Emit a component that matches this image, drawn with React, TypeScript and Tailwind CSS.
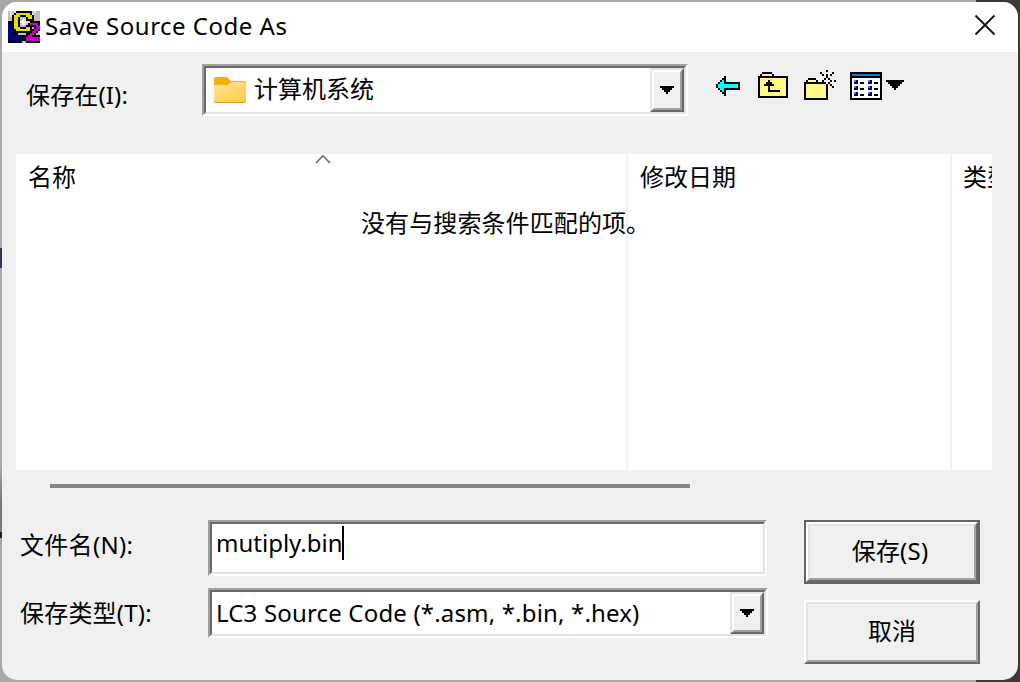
import React from "react";

const palette: Record<string, string> = {
  K: "#000000",
  C: "#00ffff",
  Y: "#ffff66",
  y: "#fff4a8",
  U: "#e6e000",
  B: "#000080",
  M: "#c800c8",
  g: "#c0c0c0",
  w: "#e4e4e4",
  W: "#ffffff",
  H: "#1477c9",
  N: "#000080",
  l: "#7474c4",
};

function PixelArt({ rows, label }: { rows: string[]; label: string }) {
  const w = rows[0].length;
  const h = rows.length;
  return (
    <svg
      width={w * 2}
      height={h * 2}
      viewBox={`0 0 ${w} ${h}`}
      shapeRendering="crispEdges"
      aria-label={label}
      className="block shrink-0"
    >
      {rows.flatMap((row, r) =>
        row.split("").map((ch, c) => {
          if (ch === ".") return null;
          const fill = ch === "Y" && (r + c) % 2 ? palette.y : palette[ch];
          return <rect key={`${r}-${c}`} x={c} y={r} width={1} height={1} fill={fill} />;
        })
      )}
    </svg>
  );
}

const logo = [
  "gwgwKKKKKKKKgwgg",
  "gwgKUUUUUUUKwggg",
  "gwKUUUKKKUUUKggg",
  "ggKUUKgggKUUKggg",
  "ggKUUKgWwKKKKggg",
  "KKKUUKWWWwgKKKKK",
  "BBKUUKgWwgKMMMMK",
  "BBKUUKgggKKKKKMM",
  "BBKUUUKKKUUKgKMM",
  "BBBKUUUUUUUKKMMK",
  "BBBKKKKKKKKKMMKg",
  "BBKKKggggKKMMKgg",
  "BBBBBBBKKKMMKKKK",
  "BBBBBBBKKMMMMMMM",
  "BBBBBBBKKMMMMMMM",
  "KKKKKKKggKKKKKKK",
];

const back = [
  "....K.......",
  "...KK.......",
  "..KCK.......",
  ".KCCKKKKKKKK",
  "KCCCCCCCCCCK",
  "KCCCCCCCCCCK",
  ".KCCKKKKKKKK",
  "..KCK.......",
  "...KK.......",
  "....K.......",
];

const up = [
  "..KKKKK........",
  ".KYYYYYK.......",
  "KKKKKKKKKKKKKKK",
  "KYYYYYYYYYYYYYK",
  "KYYYYKYYYYYYYYK",
  "KYYYKKKYYYYYYYK",
  "KYYKKKKKYYYYYYK",
  "KYYYYKYYYYYYYYK",
  "KYYYYKYYYYYYYYK",
  "KYYYYKKKKKKYYYK",
  "KYYYYYYYYYYYYYK",
  "KYYYYYYYYYYYYYK",
  "KKKKKKKKKKKKKKK",
];

const create = [
  "...........K....",
  "........K.....K.",
  ".........K.K.K..",
  "...........K....",
  "..KKKK....K.K...",
  ".KYYYYK..K...K.K",
  "KKKKKKKKKKK.K...",
  "KYYYYYYYYYYK.K..",
  "KYYYYYYYYYYK..K.",
  "KYYYYYYYYYYK....",
  "KYYYYYYYYYYK....",
  "KYYYYYYYYYYK....",
  "KYYYYYYYYYYK....",
  "KYYYYYYYYYYK....",
  "KKKKKKKKKKKK....",
];

const view = [
  "KKKKKKKKKKKKKKKK",
  "KHHHHHHHHHHHHHHK",
  "KKKKKKKKKKKKKKKK",
  "KWWWWWWWWWWWWWWK",
  "KWlNWWWWWlNWWWWK",
  "KWNNWKKWWNNWKKWK",
  "KWWWWWWWWWWWWWWK",
  "KWlNWWWWWlNWWWWK",
  "KWNNWKKWWNNWKKWK",
  "KWWWWWWWWWWWWWWK",
  "KWlNWWWWWlNWWWWK",
  "KWNNWKKWWNNWKKWK",
  "KWWWWWWWWWWWWWWK",
  "KKKKKKKKKKKKKKKK",
];

const bigArrow = ["KKKKKKKKK", ".KKKKKKK.", "..KKKKK..", "...KKK...", "....K...."];
const smallArrow = ["KKKKKKK", ".KKKKK.", "..KKK..", "...K..."];

function Sunken({ className, children }: { className: string; children: React.ReactNode }) {
  return (
    <div className={`border-2 border-t-[#a0a0a0] border-l-[#a0a0a0] border-r-white border-b-white ${className}`}>
      <div className="flex h-full w-full border-2 border-t-[#696969] border-l-[#696969] border-r-[#e3e3e3] border-b-[#e3e3e3] bg-white">
        {children}
      </div>
    </div>
  );
}

function DropButton() {
  return (
    <button className="h-full w-[34px] shrink-0 border-2 border-t-[#e3e3e3] border-l-[#e3e3e3] border-r-[#696969] border-b-[#696969] bg-[#f0f0f0]">
      <span className="flex h-full w-full items-center justify-center border-2 border-t-white border-l-white border-r-[#a0a0a0] border-b-[#a0a0a0]">
        <PixelArt rows={smallArrow} label="Open list" />
      </span>
    </button>
  );
}

function Raised({ children }: { children: React.ReactNode }) {
  return (
    <div className="h-full w-full border-2 border-t-white border-l-white border-r-[#696969] border-b-[#696969]">
      <div className="flex h-full w-full items-center justify-center border-2 border-t-[#e3e3e3] border-l-[#e3e3e3] border-r-[#a0a0a0] border-b-[#a0a0a0] bg-[#f0f0f0] pb-0.5">
        {children}
      </div>
    </div>
  );
}

export default function App() {
  return (
    <div className="flex h-[682px] w-[1020px] overflow-hidden bg-[linear-gradient(to_right,#a8a8a8_976px,#393939_976px)] py-0.5 font-['Noto_Sans','Noto_Sans_CJK_SC',sans-serif] text-2xl leading-8 whitespace-nowrap text-black">
      <div className="w-0.5 shrink-0 bg-[linear-gradient(to_bottom,transparent_246px,#2b3a50_246px,#2b3a50_266px,transparent_266px,transparent_464px,#777_500px,#777_530px,#222_530px,#222_536px,transparent_536px)]" />
      <div className="flex h-[678px] w-[1016px] flex-col overflow-hidden rounded-[15px] bg-[#f0f0f0]">
        <header className="flex h-[50px] shrink-0 items-center bg-white pr-[22px] pl-1.5">
          <PixelArt rows={logo} label="LC2" />
          <h1 className="mb-0.5 ml-[5px] grow tracking-[0.5px]">Save Source Code As</h1>
          <svg width="22" height="22" viewBox="0 0 22 22" className="mb-1" aria-label="Close">
            <path d="M1.5 1.5L20.5 20.5M20.5 1.5L1.5 20.5" stroke="#111" strokeWidth="1.8" />
          </svg>
        </header>

        <div className="flex h-[102px] shrink-0 items-start pt-3 pl-6">
          <span className="mt-[15px] w-44 tracking-[0.15px]">保存在(I):</span>
          <Sunken className="h-[52px] w-[486px]">
            <div className="flex grow items-center pl-2">
              <svg width="32" height="26" viewBox="0 0 32 26" aria-label="Folder" className="shrink-0">
                <defs>
                  <linearGradient id="folder" x1="0" y1="0" x2="1" y2="1">
                    <stop offset="0" stopColor="#ffe69a" />
                    <stop offset="1" stopColor="#ffcb43" />
                  </linearGradient>
                </defs>
                <path d="M0 2Q0 0 2 0H13L17 4H30Q32 4 32 6V12H0Z" fill="#f3b20b" />
                <path d="M0 8H14L17 5H30Q32 5 32 7V24Q32 26 30 26H2Q0 26 0 24Z" fill="#d99d22" />
                <path d="M0 8H14L17 5H30Q32 5 32 7V23Q32 25 30 25H2Q0 25 0 23Z" fill="url(#folder)" />
              </svg>
              <span className="mb-0.5 ml-2">计算机系统</span>
            </div>
            <DropButton />
          </Sunken>
          <div className="ml-7 flex pt-1.5">
            <div className="mt-1.5 w-[42px]">
              <PixelArt rows={back} label="Back" />
            </div>
            <div className="mt-0.5 w-[46px]">
              <PixelArt rows={up} label="Up one level" />
            </div>
            <div className="w-[46px]">
              <PixelArt rows={create} label="New folder" />
            </div>
            <div className="mt-0.5 flex gap-1">
              <PixelArt rows={view} label="View" />
              <div className="mt-2">
                <PixelArt rows={bigArrow} label="View menu" />
              </div>
            </div>
          </div>
        </div>

        <div className="relative mr-[26px] ml-3.5 flex h-[316px] shrink-0 overflow-hidden bg-white">
          <div className="w-[612px] shrink-0 border-r-2 border-[#edf3f9] pt-[7px] pl-3">名称</div>
          <div className="w-[324px] shrink-0 border-r-2 border-[#edf3f9] pt-[7px] pl-3">修改日期</div>
          <div className="w-10 shrink-0 overflow-hidden pt-[7px] pl-[11px]">类型</div>
          <svg width="16" height="10" viewBox="0 0 16 10" className="absolute top-0 left-[299px]" aria-label="Sorted ascending">
            <path d="M1 9L8 1.8L15 9" fill="none" stroke="#666" strokeWidth="1.6" />
          </svg>
          <p className="absolute top-[53px] left-[345px] tracking-[0.1px]">没有与搜索条件匹配的项。</p>
        </div>

        <div className="mt-3.5 ml-12 h-1 w-[640px] shrink-0 bg-[#858585]" />

        <div className="mt-8 flex pl-[18px]">
          <div className="flex w-[784px] flex-col gap-3">
            <div className="flex h-14">
              <label className="mt-[9px] w-[188px] tracking-[0.3px]">文件名(N):</label>
              <Sunken className="h-14 w-[559px]">
                <div className="flex pt-0.5 pl-1">
                  <span className="mt-px">mutiply.bin</span>
                  <span className="-ml-px h-[34px] w-0.5 bg-black" />
                </div>
              </Sunken>
            </div>
            <div className="flex h-[50px]">
              <label className="mt-[9px] w-[188px] tracking-[0.2px]">保存类型(T):</label>
              <Sunken className="h-[50px] w-[560px]">
                <span className="grow pt-[5px] pl-1 tracking-[0.17px]">LC3 Source Code (*.asm, *.bin, *.hex)</span>
                <DropButton />
              </Sunken>
            </div>
          </div>
          <div className="flex w-44 flex-col gap-4">
            <button className="h-16 border-2 border-[#646464]">
              <Raised>
                <span className="mr-1 tracking-[0.2px]">保存(S)</span>
              </Raised>
            </button>
            <button className="h-16">
              <Raised>取消</Raised>
            </button>
          </div>
        </div>
      </div>
    </div>
  );
}
